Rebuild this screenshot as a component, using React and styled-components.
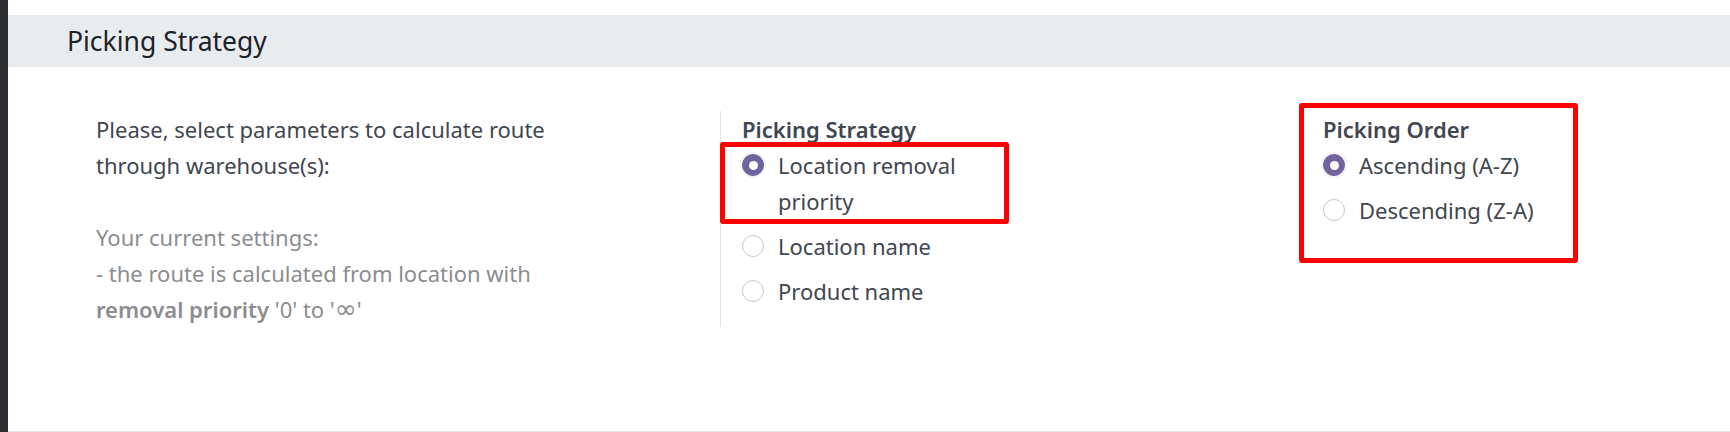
import React from "react";
import styled, { createGlobalStyle } from "styled-components";

const GlobalStyle = createGlobalStyle`
  html, body { margin: 0; padding: 0; background: #ffffff; }
  body { font-family: "Noto Sans", "Open Sans", sans-serif; }
  * { box-sizing: border-box; }
`;

const Page = styled.div`
  display: flex;
  width: 1730px;
  height: 432px;
  overflow: hidden;
`;

const SideStrip = styled.div`
  flex: 0 0 8px;
  background: #2b2d31;
`;

const Main = styled.main`
  flex: 1;
  display: flex;
  flex-direction: column;
  padding-top: 15px;
  border-bottom: 1px solid #e3e4e6;
`;

const SectionHeader = styled.header`
  height: 52px;
  display: flex;
  align-items: center;
  padding-left: 59px;
  background: #e9ecef;
`;

const SectionTitle = styled.h2`
  margin: 0;
  font-size: 26.5px;
  line-height: 52px;
  font-weight: 400;
  color: #1e2126;
`;

const SettingsRow = styled.div`
  display: grid;
  grid-template-columns: 624px 603px 1fr;
  margin-top: 44px;
  padding-left: 88px;
  font-size: 22px;
  line-height: 36px;
  color: #414650;
`;

const Description = styled.div`
  max-width: 500px;
`;

const Para = styled.p`
  margin: 0;
  color: ${(p) => (p.$muted ? "#8b8d91" : "#414650")};
`;

const Strong = styled.strong`
  font-weight: 600;
`;

const Infinity = styled.span`
  font-family: "DejaVu Sans", sans-serif;
  font-size: 1.2em;
  line-height: 0;
`;

const OptionGroup = styled.section`
  position: relative;
  padding-left: ${(p) => (p.$divider ? "21px" : "0")};
  border-left: ${(p) => (p.$divider ? "1px solid #dfe2e6" : "none")};
`;

const GroupLabel = styled.div`
  font-weight: 600;
  color: #414650;
`;

const OptionList = styled.div`
  display: flex;
  flex-direction: column;
  gap: 9px;
`;

const Option = styled.label`
  position: relative;
  display: flex;
  align-items: flex-start;
  gap: 14px;
  max-width: 230px;
  cursor: pointer;
`;

const RadioMark = styled.span`
  flex: 0 0 22px;
  width: 22px;
  height: 22px;
  margin-top: 7px;
  border-radius: 50%;
  position: relative;
  background: ${(p) => (p.$checked ? "#71639e" : "#ffffff")};
  border: ${(p) => (p.$checked ? "1px solid #71639e" : "1.5px solid #c6c8cb")};
  box-shadow: ${(p) => (p.$checked ? "0 0 0 2px rgba(113, 99, 158, 0.08)" : "none")};

  &::after {
    content: "";
    display: ${(p) => (p.$checked ? "block" : "none")};
    position: absolute;
    left: 50%;
    top: 50%;
    width: 9px;
    height: 9px;
    margin: -4.5px 0 0 -4.5px;
    border-radius: 50%;
    background: #ffffff;
  }
`;

const OptionText = styled.span`
  color: #414650;
`;

/* Red annotation frames drawn over the screenshot */
const Highlight = styled.div`
  position: absolute;
  left: ${(p) => p.$left}px;
  top: ${(p) => p.$top}px;
  width: ${(p) => p.$width}px;
  height: ${(p) => p.$height}px;
  border: 5px solid #ff0000;
  border-radius: 3px;
  pointer-events: none;
`;

const strategies = [
  { label: "Location removal priority", checked: true, highlight: true },
  { label: "Location name" },
  { label: "Product name" },
];

const orders = [
  { label: "Ascending (A-Z)", checked: true },
  { label: "Descending (Z-A)" },
];

function RadioOption({ label, checked, children }) {
  return (
    <Option>
      <RadioMark $checked={checked} />
      <OptionText>{label}</OptionText>
      {children}
    </Option>
  );
}

export default function App() {
  return (
    <>
      <GlobalStyle />
      <Page>
        <SideStrip />
        <Main>
          <SectionHeader>
            <SectionTitle>Picking Strategy</SectionTitle>
          </SectionHeader>
          <SettingsRow>
            <Description>
              <Para>Please, select parameters to calculate route through warehouse(s):</Para>
              <Para>&nbsp;</Para>
              <Para $muted>Your current settings:</Para>
              <Para $muted>- the route is calculated from location with</Para>
              <Para $muted>
                <Strong>removal priority</Strong> '0' to '<Infinity>∞</Infinity>'
              </Para>
            </Description>

            <OptionGroup $divider>
              <GroupLabel>Picking Strategy</GroupLabel>
              <OptionList>
                {strategies.map((s) => (
                  <RadioOption key={s.label} label={s.label} checked={s.checked}>
                    {s.highlight && <Highlight $left={-22} $top={-5} $width={289} $height={82} />}
                  </RadioOption>
                ))}
              </OptionList>
            </OptionGroup>

            <OptionGroup>
              <GroupLabel>Picking Order</GroupLabel>
              <OptionList>
                {orders.map((o) => (
                  <RadioOption key={o.label} label={o.label} checked={o.checked} />
                ))}
              </OptionList>
              <Highlight $left={-24} $top={-8} $width={279} $height={160} />
            </OptionGroup>
          </SettingsRow>
        </Main>
      </Page>
    </>
  );
}
